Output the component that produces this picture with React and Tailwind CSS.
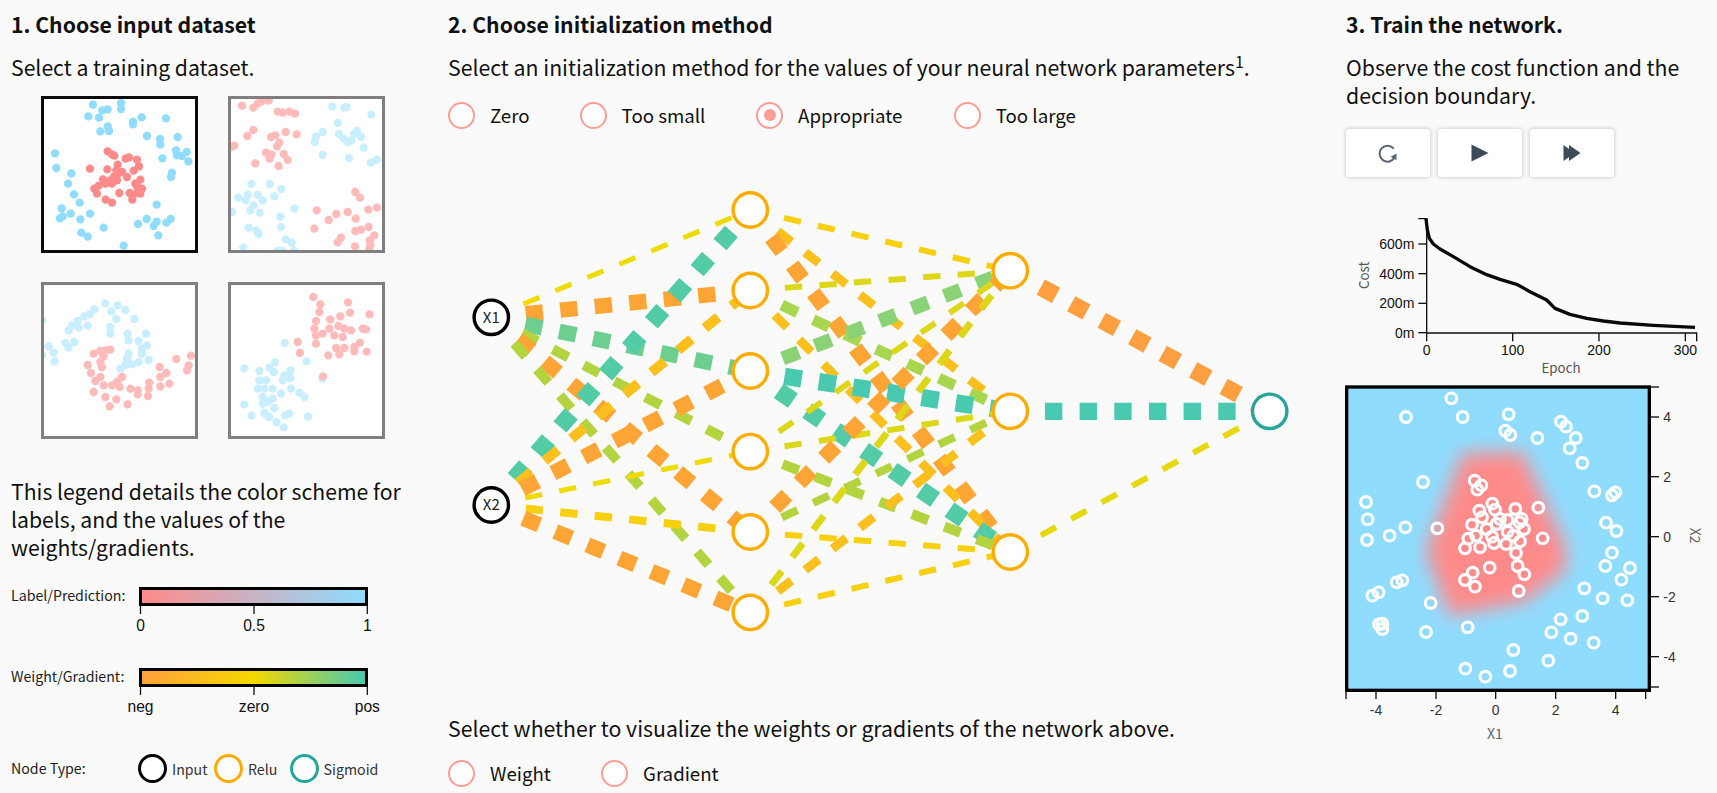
const body = { fontFamily: '"Noto Sans CJK SC","Noto Sans",sans-serif' };
const arial = '"Liberation Sans",Arial,sans-serif';
const src = '"Noto Sans CJK SC","Noto Sans",sans-serif';

const T1R = [[322,453],[335,462],[342,466],[376,475],[386,471],[410,478],[416,498],[269,505],[321,507],[352,493],[348,510],[400,511],[365,515],[380,530],[340,530],[350,525],[308,537],[420,538],[405,550],[335,550],[315,550],[295,556],[282,565],[415,565],[425,565],[290,580],[357,578],[388,578],[410,578],[420,580],[396,598],[316,598],[335,607],[350,540],[330,540],[410,558],[395,585]];
const T1B = [[278,313],[362,308],[362,326],[306,330],[322,327],[264,348],[296,352],[424,351],[497,354],[398,364],[398,372],[322,378],[326,392],[300,393],[440,407],[479,416],[532,410],[480,433],[527,450],[559,455],[530,465],[545,467],[564,483],[486,474],[164,459],[168,503],[213,519],[515,517],[512,530],[203,550],[221,582],[238,607],[469,613],[184,624],[211,640],[269,640],[187,648],[179,654],[240,657],[439,656],[469,664],[413,671],[511,656],[498,667],[460,677],[310,682],[243,697],[262,709],[474,705],[370,736]];
const T2R = [[723,316],[757,322],[770,310],[782,303],[803,301],[830,334],[845,337],[866,334],[882,340],[757,389],[739,407],[854,395],[887,402],[810,410],[823,405],[835,427],[828,438],[700,436],[690,440],[795,457],[812,462],[806,475],[848,461],[860,479],[763,489],[833,497],[1063,575],[1077,592],[947,630],[1006,641],[1040,635],[1102,628],[1128,622],[983,659],[1064,655],[940,685],[1103,680],[1063,692],[1080,688],[1020,712],[1010,726],[1120,705],[1106,720],[1108,735],[1062,738],[1105,748]];
const T2B = [[994,319],[1030,322],[1037,320],[1111,343],[1011,368],[945,408],[965,395],[941,425],[1014,401],[1028,415],[1040,425],[1052,420],[1060,400],[1068,392],[1080,410],[1088,442],[965,464],[1044,473],[1110,487],[1128,478],[751,551],[806,551],[841,566],[712,592],[740,583],[734,600],[770,584],[785,600],[820,588],[758,615],[748,630],[776,637],[693,635],[880,625],[838,649],[743,682],[840,680],[766,690],[773,701],[854,717],[872,728],[727,741],[830,752],[845,752],[880,752]];
const T3B = [[315,909],[352,915],[375,929],[333,934],[282,927],[268,942],[252,948],[232,962],[215,975],[205,990],[235,982],[262,976],[348,956],[402,956],[330,980],[330,1000],[382,1000],[437,1000],[385,1020],[415,1022],[440,1035],[425,1045],[195,1028],[222,1025],[205,1042],[145,1038],[160,1057],[125,960],[125,1065],[163,1083],[385,1060],[425,1060],[380,1075],[445,1079],[415,1085],[395,1092],[375,1095],[360,1105]];
const T3R = [[330,1048],[315,1050],[300,1052],[280,1060],[310,1068],[300,1085],[262,1094],[305,1100],[272,1118],[528,1076],[572,1066],[565,1095],[560,1110],[478,1100],[498,1118],[480,1130],[300,1130],[285,1142],[310,1155],[365,1130],[350,1145],[335,1155],[358,1160],[507,1150],[480,1158],[447,1147],[445,1165],[390,1165],[412,1170],[412,1182],[443,1187],[280,1175],[315,1190],[348,1197],[382,1212],[328,1218]];
const T4R = [[937,890],[958,912],[1041,906],[955,935],[1047,937],[1106,942],[1018,948],[988,957],[945,962],[940,985],[1012,977],[985,985],[1030,985],[1050,990],[1085,985],[1095,987],[965,1000],[945,1005],[1000,1005],[1025,1010],[1077,1027],[945,1030],[890,1025],[1060,1040],[1005,1043],[1030,1043],[1060,1053],[1097,1054],[897,1058],[982,1065],[1015,1062],[966,1128]];
const T4B = [[851,1028],[917,1083],[822,1086],[730,1104],[775,1112],[805,1102],[818,1115],[868,1110],[850,1125],[868,1133],[845,1140],[775,1140],[795,1140],[770,1165],[790,1165],[815,1165],[840,1180],[870,1165],[895,1177],[910,1190],[785,1190],[815,1195],[800,1205],[785,1210],[730,1213],[820,1223],[752,1246],[790,1238],[804,1250],[852,1245],[865,1240],[921,1249],[826,1265],[848,1281],[964,1135]];

const THUMBS = [
  { x: 131, y: 296, red: T1R, blue: T1B, rc: '#ff8a8a', bc: '#8fdcff', active: true },
  { x: 690, y: 296, red: T2R, blue: T2B, rc: '#ffbaba', bc: '#c9eeff' },
  { x: 131, y: 854, red: T3R, blue: T3B, rc: '#ffbaba', bc: '#c9eeff' },
  { x: 690, y: 854, red: T4R, blue: T4B, rc: '#ffbaba', bc: '#c9eeff' },
];

function Thumb({ t }) {
  return (
    <div className={t.active ? 'w-[157px] h-[157px] border-[3px] border-[#0c0c0c] bg-white overflow-hidden' : 'w-[157px] h-[157px] border-[3px] border-[#7f7f7f] bg-white overflow-hidden'}>
      <svg width="151" height="151" viewBox={`${t.x} ${t.y} 453 453`} className="block">
        {t.blue.map((p, i) => <circle key={i} cx={p[0]} cy={p[1]} r="12.5" fill={t.bc} />)}
        {t.red.map((p, i) => <circle key={i} cx={p[0]} cy={p[1]} r="12.5" fill={t.rc} />)}
      </svg>
    </div>
  );
}

const O = '#ffa535', TEAL = '#52cba6', T2 = '#48c9b0', G = '#6dcf8f', YG = '#b3d43f', Y = '#eedc00', YO = '#fbc01e', Y2 = '#f7d00f', YL = '#dcd819', G2 = '#8ad276', YG2 = '#a9d64f';
const IN = [[491.3, 317.3], [491.3, 505]];
const H1 = [210, 290.5, 371, 451.6, 532, 612.4].map(y => [750.3, y]);
const H2 = [270.7, 411.3, 552].map(y => [1010.3, y]);
const OUT = [1269.7, 411.3];
const E1 = [
  [[Y, 5], [O, 15.5], [G, 15.5], [YG, 10], [O, 15.5], [YG, 10]],
  [[TEAL, 17.3], [YO, 10], [O, 15.5], [Y, 5], [Y2, 8], [O, 15.5]],
];
const E2 = [
  [[Y2, 6], [YO, 9], [O, 15.5]],
  [[YL, 6], [YG2, 11], [YO, 9]],
  [[G2, 14], [T2, 17.3], [TEAL, 17.3]],
  [[YL, 6], [YL, 6], [YG, 10]],
  [[O, 15.5], [YG, 8], [Y2, 6]],
  [[YL, 7], [YO, 9], [Y2, 6]],
];
const E3 = [['#ff9f40', 17.3], [T2, 17.3], ['#e6d80e', 6]];

function Edge({ a, b, c, w }) {
  return <line x1={a[0]} y1={a[1]} x2={b[0]} y2={b[1]} stroke={c} strokeWidth={w} strokeDasharray="17.33 17.33" />;
}
function Node({ p, c, label }) {
  return (
    <g>
      <circle cx={p[0]} cy={p[1]} r="17.2" fill="#fff" stroke={c} strokeWidth="3.4" />
      {label && <text x={p[0]} y={p[1] + 5.4} textAnchor="middle" fontSize="15" fill="#222" style={{ fontFamily: src }}>{label}</text>}
    </g>
  );
}

function Network() {
  return (
    <svg width="900" height="530" viewBox="440 160 900 530" className="block -ml-[8px]">
      {IN.map((a, i) => H1.map((b, j) => <Edge key={`a${i}${j}`} a={a} b={b} c={E1[i][j][0]} w={E1[i][j][1]} />))}
      {H1.map((a, i) => H2.map((b, j) => <Edge key={`b${i}${j}`} a={a} b={b} c={E2[i][j][0]} w={E2[i][j][1]} />))}
      {H2.map((a, i) => <Edge key={`c${i}`} a={a} b={OUT} c={E3[i][0]} w={E3[i][1]} />)}
      <Node p={IN[0]} c="#000" label="X1" />
      <Node p={IN[1]} c="#000" label="X2" />
      {H1.map((p, i) => <Node key={i} p={p} c="#ffab00" />)}
      {H2.map((p, i) => <Node key={i} p={p} c="#ffab00" />)}
      <Node p={OUT} c="#26a69a" />
    </svg>
  );
}

function Radio({ label, checked, className }) {
  return (
    <div className={`flex items-center ${className || ''}`}>
      <span className="w-[27px] h-[27px] rounded-full border-[2.5px] border-[#ff9d94] bg-white flex items-center justify-center shrink-0">
        {checked && <span className="w-[12px] h-[12px] rounded-full bg-[#ff9d94]" />}
      </span>
      <span className="ml-[15px] text-[18.7px] leading-[28px] text-[#111]">{label}</span>
    </div>
  );
}

function Scale({ labels }) {
  return (
    <svg width="300" height="32" viewBox="-19 0 300 32" className="block overflow-visible">
      {[1.5, 115, 228.3].map((x, i) => (
        <g key={i}>
          <line x1={x} y1="0" x2={x} y2="8" stroke="#111" strokeWidth="1.3" />
          <text x={x} y="25" textAnchor="middle" fontSize="15.6" fill="#111" style={{ fontFamily: arial }}>{labels[i]}</text>
        </g>
      ))}
    </svg>
  );
}

function Legend({ label, grad, labels }) {
  return (
    <div className="flex">
      <div className="w-[128px] text-[14.2px] leading-[19px] text-[#222] -mt-[1px]">{label}</div>
      <div>
        <div className={`w-[229px] h-[19px] border-[3px] border-black ${grad}`} />
        <div className="-ml-[19px]"><Scale labels={labels} /></div>
      </div>
    </div>
  );
}

function NodeKey({ color, label, w }) {
  return (
    <div className={`flex items-center ${w}`}>
      <span className="w-[29px] h-[29px] rounded-full bg-white border-[3px] shrink-0" style={{ borderColor: color }} />
      <span className="ml-[5px] text-[14.2px] text-[#333] leading-[20px]">{label}</span>
    </div>
  );
}

function Cost() {
  const c = [[318,656],[322,690],[328,715],[340,732],[360,747],[400,770],[450,800],[500,824],[540,838],[590,853],[630,875],[680,900],[705,925],[750,943],[800,955],[850,963],[900,969],[1000,976],[1125,982]];
  const yt = [[998, '0m'], [910, '200m'], [821, '400m'], [732, '600m']];
  const xt = [[320, '0'], [578, '100'], [837, '200'], [1096, '300']];
  const fs = 42;
  return (
    <svg width="397" height="180" viewBox="0 600 1191 540" className="block">
      <path d="M295 656H320V999H1130V1024" fill="none" stroke="#111" strokeWidth="4" />
      {yt.map(([y, l]) => (
        <g key={l}>
          <line x1="295" x2="320" y1={y} y2={y} stroke="#111" strokeWidth="4" />
          <text x="283" y={y + 15} textAnchor="end" fontSize={fs} fill="#111" style={{ fontFamily: arial }}>{l}</text>
        </g>
      ))}
      {xt.map(([x, l]) => (
        <g key={l}>
          <line x1={x} x2={x} y1="999" y2="1024" stroke="#111" strokeWidth="4" />
          <text x={x} y="1066" textAnchor="middle" fontSize={fs} fill="#111" style={{ fontFamily: arial }}>{l}</text>
        </g>
      ))}
      <polyline points={c.map(p => p.join(',')).join(' ')} fill="none" stroke="#0a0a0a" strokeWidth="10" strokeLinejoin="round" />
      <text x="723" y="1118" textAnchor="middle" fontSize="40" fill="#555" style={{ fontFamily: src }}>Epoch</text>
      <text transform="translate(146 826) rotate(-90)" textAnchor="middle" fontSize="40" fill="#555" style={{ fontFamily: src }}>Cost</text>
    </svg>
  );
}

const PTS = [[394,88],[258,144],[428,144],[566,136],[723,158],[738,173],[556,185],[571,198],[652,207],[767,207],[749,238],[787,282],[309,339],[464,335],[484,349],[472,362],[823,367],[886,370],[876,379],[138,399],[517,404],[478,425],[525,422],[586,420],[655,416],[143,451],[486,445],[540,450],[562,453],[605,450],[598,460],[456,467],[530,465],[500,480],[612,480],[858,461],[256,475],[352,478],[889,486],[563,488],[209,500],[141,513],[445,509],[468,500],[516,503],[580,500],[668,508],[600,517],[522,522],[558,525],[435,538],[480,535],[876,551],[588,552],[856,591],[509,596],[593,591],[930,597],[613,616],[458,611],[435,633],[904,632],[247,634],[230,640],[465,653],[793,658],[596,666],[176,670],[157,680],[848,688],[922,694],[332,702],[722,751],[787,741],[187,764],[177,766],[187,780],[443,775],[318,789],[694,790],[752,809],[821,821],[580,843],[685,875],[436,899],[570,906],[496,923]];

function Boundary() {
  const xt = [[168, '-4'], [348, '-2'], [527, '0'], [707, '2'], [887, '4']];
  const yt = [[144, '4'], [323, '2'], [503, '0'], [683, '-2'], [863, '-4']];
  return (
    <svg width="397" height="400" viewBox="0 30 1191 1200" className="block">
      <defs>
        <filter id="blur" x="-40%" y="-40%" width="180%" height="180%"><feGaussianBlur stdDeviation="28" /></filter>
        <clipPath id="frame"><rect x="80" y="54" width="908" height="910" /></clipPath>
      </defs>
      <g clipPath="url(#frame)">
        <rect x="80" y="54" width="908" height="910" fill="#8fdcff" />
        <polygon points="428,252 608,248 738,535 738,602 615,698 388,742 318,545" fill="#ff8a8a" filter="url(#blur)" />
      </g>
      {PTS.map((p, i) => <circle key={i} cx={p[0]} cy={p[1]} r="16" fill="none" stroke="#fff" strokeWidth="9.5" />)}
      <rect x="80" y="54" width="908" height="910" fill="none" stroke="#000" strokeWidth="10" />
      <line x1="78" x2="78" y1="964" y2="990" stroke="#111" strokeWidth="4" />
      <line x1="977" x2="977" y1="964" y2="990" stroke="#111" strokeWidth="4" />
      <line x1="988" x2="1017" y1="54" y2="54" stroke="#111" strokeWidth="4" />
      <line x1="988" x2="1017" y1="954" y2="954" stroke="#111" strokeWidth="4" />
      {xt.map(([x, l]) => (
        <g key={l}>
          <line x1={x} x2={x} y1="964" y2="990" stroke="#111" strokeWidth="4" />
          <text x={x} y="1037" textAnchor="middle" fontSize="42" fill="#333" style={{ fontFamily: arial }}>{l}</text>
        </g>
      ))}
      {yt.map(([y, l]) => (
        <g key={l}>
          <line x1="988" x2="1017" y1={y} y2={y} stroke="#111" strokeWidth="4" />
          <text x="1030" y={y + 15} fontSize="42" fill="#333" style={{ fontFamily: arial }}>{l}</text>
        </g>
      ))}
      <text x="525" y="1110" textAnchor="middle" fontSize="42" fill="#666" style={{ fontFamily: src }}>X1</text>
      <text transform="translate(1110 500) rotate(90)" textAnchor="middle" fontSize="42" fill="#666" style={{ fontFamily: src }}>X2</text>
    </svg>
  );
}

function Btn({ children }) {
  return (
    <div className="w-[84px] h-[48px] bg-white rounded-[3px] shadow-[0_0_4px_rgba(0,0,0,0.25)] flex items-center justify-center">
      {children}
    </div>
  );
}

export default function App() {
  return (
    <div className="w-[1717px] h-[793px] overflow-hidden bg-[#fafafa] flex text-[#111]" style={body}>
      <div className="w-[448px] pl-[11px] pt-[10px] shrink-0">
        <h2 className="text-[21.2px] font-bold leading-[28px]">1. Choose input dataset</h2>
        <p className="mt-[15px] text-[21.2px] leading-[28px]">Select a training dataset.</p>
        <div className="ml-[30px] mt-[15px] grid grid-cols-[157px_157px] gap-x-[29.6px] gap-y-[29px]">
          {THUMBS.map((t, i) => <Thumb key={i} t={t} />)}
        </div>
        <p className="mt-[38px] w-[410px] text-[21.2px] leading-[28px]">This legend details the color scheme for labels, and the values of the weights/gradients.</p>
        <div className="mt-[26px]">
          <Legend label="Label/Prediction:" grad="bg-[linear-gradient(to_right,#ff8a8a,#8fdcff)]" labels={['0', '0.5', '1']} />
        </div>
        <div className="mt-[30px]">
          <Legend label="Weight/Gradient:" grad="bg-[linear-gradient(to_right,#ffa03c,#f5d800_50%,#48c9b0)]" labels={['neg', 'zero', 'pos']} />
        </div>
        <div className="mt-[35px] flex items-center">
          <div className="w-[127px] text-[14.2px] text-[#222]">Node Type:</div>
          <NodeKey color="#000" label="Input" w="w-[76px]" />
          <NodeKey color="#ffab00" label="Relu" w="w-[75.6px]" />
          <NodeKey color="#26a69a" label="Sigmoid" w="" />
        </div>
      </div>

      <div className="w-[898px] pt-[10px] shrink-0">
        <h2 className="text-[21.2px] font-bold leading-[28px]">2. Choose initialization method</h2>
        <p className="mt-[15px] text-[21.25px] leading-[28px]">Select an initialization method for the values of your neural network parameters<sup className="text-[16px] leading-none">1</sup>.</p>
        <div className="mt-[20px] flex">
          <Radio label="Zero" className="w-[131.6px]" />
          <Radio label="Too small" className="w-[176.5px]" />
          <Radio label="Appropriate" checked className="w-[197.6px]" />
          <Radio label="Too large" />
        </div>
        <div className="mt-[31px]"><Network /></div>
        <p className="mt-[24px] text-[21.25px] leading-[28px]">Select whether to visualize the weights or gradients of the network above.</p>
        <div className="mt-[17px] flex">
          <Radio label="Weight" className="w-[153px]" />
          <Radio label="Gradient" />
        </div>
      </div>

      <div className="flex-1 pt-[10px] pl-0">
        <h2 className="text-[21.2px] font-bold leading-[28px]">3. Train the network.</h2>
        <p className="mt-[15px] w-[350px] text-[21.25px] leading-[28px]">Observe the cost function and the decision boundary.</p>
        <div className="mt-[20px] flex gap-[8px]">
          <Btn>
            <svg width="20" height="20" viewBox="0 0 20 20" fill="none">
              <path d="M15.8 5.6A8 8 0 1 0 16.6 14.6" stroke="#5b6670" strokeWidth="2" />
              <path d="M18.6 10.6l-.2 6.6-5.8-3.4z" fill="#5b6670" />
            </svg>
          </Btn>
          <Btn>
            <svg width="18" height="18" viewBox="0 0 18 18"><path d="M.5.5L17.5 9 .5 17.5z" fill="#3d4b59" /></svg>
          </Btn>
          <Btn>
            <svg width="18" height="18" viewBox="0 0 18 18"><path d="M.5 1L11.5 9 .5 17zM6 1L17.5 9 6 17z" fill="#3d4b59" /></svg>
          </Btn>
        </div>
        <div className="-ml-[26px] mt-[23px]"><Cost /></div>
        <div className="-ml-[26px] -mt-[1px]"><Boundary /></div>
      </div>
    </div>
  );
}
